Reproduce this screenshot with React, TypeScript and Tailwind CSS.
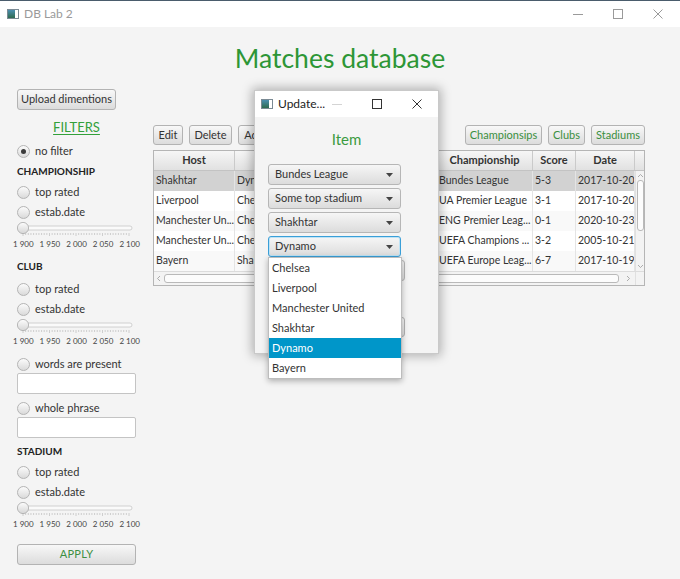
import React from 'react';

const matches = [
  { host: 'Shakhtar', guest: 'Dynamo', stadium: 'Donbass Arena', champ: 'Bundes League', score: '5-3', date: '2017-10-20' },
  { host: 'Liverpool', guest: 'Chelsea', stadium: 'Anfield', champ: 'UA Premier League', score: '3-1', date: '2017-10-20' },
  { host: 'Manchester Un...', guest: 'Chelsea', stadium: 'Old Trafford', champ: 'ENG Premier Leag...', score: '0-1', date: '2020-10-23' },
  { host: 'Manchester Un...', guest: 'Chelsea', stadium: 'Old Trafford', champ: 'UEFA Champions ...', score: '3-2', date: '2005-10-21' },
  { host: 'Bayern', guest: 'Shakhtar', stadium: 'Allianz Arena', champ: 'UEFA Europe Leag...', score: '6-7', date: '2017-10-19' },
];

const clubs = ['Chelsea', 'Liverpool', 'Manchester United', 'Shakhtar', 'Dynamo', 'Bayern'];

function AppIcon() {
  return (
    <svg width="12" height="10" viewBox="0 0 12 10" className="shrink-0">
      <defs>
        <linearGradient id="ai" x1="0" y1="0" x2="0" y2="1">
          <stop offset="0" stopColor="#4a8fb0" />
          <stop offset="1" stopColor="#2e6b4f" />
        </linearGradient>
      </defs>
      <rect x="0.5" y="0.5" width="11" height="9" fill="#fff" stroke="#7a8a94" />
      <rect x="1" y="1" width="7" height="8" fill="url(#ai)" />
    </svg>
  );
}

function Radio({ checked = false }: { checked?: boolean }) {
  return (
    <span className="relative inline-block w-[13px] h-[13px] rounded-full border border-[#b4b4b4] bg-gradient-to-b from-[#fbfbfb] to-[#dadada] shrink-0">
      {checked && <span className="absolute left-[3px] top-[3px] w-[5px] h-[5px] rounded-full bg-[#3a3a3a]" />}
    </span>
  );
}

function RadioRow({ label, checked = false, h = 'h-[20px]' }: { label: string; checked?: boolean; h?: string }) {
  return (
    <div className={`flex items-center gap-[5px] ${h} text-[11px] text-[#333]`}>
      <Radio checked={checked} />
      <span>{label}</span>
    </div>
  );
}

function SectionTitle({ children, mt }: { children: React.ReactNode; mt: string }) {
  return <div className={`${mt} h-[16px] leading-[16px] text-[10px] font-bold text-[#222]`}>{children}</div>;
}

function Slider() {
  const ticks = [];
  for (let i = 0; i <= 40; i++) {
    const x = 6 + i * (106 / 40);
    const major = i % 10 === 0;
    ticks.push(<line key={i} x1={x} x2={x} y1={11} y2={major ? 14 : 13} stroke="#c4c4c4" strokeWidth="0.8" />);
  }
  return (
    <div className="h-[25px]">
      <svg width="119" height="14" viewBox="0 0 119 14" className="block">
        <defs>
          <linearGradient id="th" x1="0" y1="0" x2="0" y2="1">
            <stop offset="0" stopColor="#fdfdfd" />
            <stop offset="1" stopColor="#d6d6d6" />
          </linearGradient>
        </defs>
        <rect x="1" y="4" width="114" height="4" rx="2" fill="#fafafa" stroke="#c6c6c6" strokeWidth="0.8" />
        {ticks}
        <circle cx="6" cy="6" r="5.6" fill="url(#th)" stroke="#a9a9a9" strokeWidth="0.8" />
      </svg>
      <div className="ml-[-4px] w-[127px] flex justify-between text-[8px] leading-[10px] text-[#444] mt-[3px]">
        <span>1 900</span>
        <span>1 950</span>
        <span>2 000</span>
        <span>2 050</span>
        <span>2 100</span>
      </div>
    </div>
  );
}

function FxButton({ children, className = '' }: { children?: React.ReactNode; className?: string }) {
  return (
    <div
      className={`h-[20px] flex items-center justify-center rounded-[3px] border border-[#b3b3b3] bg-gradient-to-b from-[#f8f8f8] to-[#dcdcdc] text-[11px] ${className}`}
    >
      {children}
    </div>
  );
}

function TextField() {
  return <div className="w-[119px] h-[21px] border border-[#c4c4c4] rounded-[2px] bg-white" />;
}

function Combo({ label, focused = false, className = '' }: { label: string; focused?: boolean; className?: string }) {
  return (
    <div
      className={`h-[21px] flex items-center justify-between pl-[6px] pr-[7px] rounded-[3px] border bg-gradient-to-b from-[#f6f6f6] to-[#dcdcdc] text-[11px] text-[#333] ${
        focused ? 'border-[#3a9fd8] shadow-[inset_0_0_0_1px_#bfe3f5]' : 'border-[#b6b6b6]'
      } ${className}`}
    >
      <span>{label}</span>
      <svg width="7" height="4" viewBox="0 0 7 4">
        <path d="M0 0 L7 0 L3.5 4 Z" fill="#444" />
      </svg>
    </div>
  );
}

function WinControls({ dim = false, gap }: { dim?: boolean; gap: string }) {
  return (
    <div className={`flex items-center ${gap}`}>
      <svg width="10" height="10" viewBox="0 0 10 10">
        <line x1="0" y1="5.5" x2="10" y2="5.5" stroke={dim ? '#d4d4d4' : '#9a9a9a'} strokeWidth="1" />
      </svg>
      <svg width="10" height="10" viewBox="0 0 10 10">
        <rect x="0.5" y="0.5" width="9" height="9" fill="none" stroke={dim ? '#333' : '#9a9a9a'} strokeWidth="1" />
      </svg>
      <svg width="10" height="10" viewBox="0 0 10 10">
        <path d="M0.5 0.5 L9.5 9.5 M9.5 0.5 L0.5 9.5" stroke={dim ? '#333' : '#9a9a9a'} strokeWidth="1" />
      </svg>
    </div>
  );
}

function Table() {
  const cols = ['w-[81px]', 'w-[101px]', 'w-[101px]', 'w-[96px]', 'w-[43px]', 'w-[59px]'];
  const heads = ['Host', 'Guest', 'Stadium', 'Championship', 'Score', 'Date'];
  return (
    <div className="mt-[5px] w-[492px] border border-[#b5b5b5] bg-white">
      <div className="flex h-[20px] border-b border-[#c3c3c3] bg-gradient-to-b from-[#f6f6f6] to-[#e1e1e1]">
        {heads.map((h, i) => (
          <div key={h} className={`${cols[i]} shrink-0 border-r border-[#cacaca] flex items-center justify-center text-[11px] font-bold text-[#333]`}>
            {h}
          </div>
        ))}
        <div className="flex-1" />
      </div>
      <div className="flex">
        <div className="flex-1">
          {matches.map((m, r) => {
            const vals = [m.host, m.guest, m.stadium, m.champ, m.score, m.date];
            const bg = r === 0 ? 'bg-[#d2d2d2]' : r % 2 === 1 ? 'bg-white' : 'bg-[#f9f9f9]';
            return (
              <div key={r} className={`flex h-[20px] ${bg}`}>
                {vals.map((v, i) => (
                  <div
                    key={i}
                    className={`${cols[i]} shrink-0 border-r border-[#e4e4e4] pl-[2px] flex items-center overflow-hidden whitespace-nowrap text-[10.5px] text-[#333]`}
                  >
                    {v}
                  </div>
                ))}
              </div>
            );
          })}
        </div>
        <div className="w-[9px] shrink-0 bg-[#f3f3f3] border-l border-[#e0e0e0] flex flex-col items-center">
          <svg width="7" height="6" viewBox="0 0 7 6" className="mt-[2px]">
            <path d="M1 4 L3.5 1.5 L6 4" fill="none" stroke="#999" strokeWidth="0.8" />
          </svg>
          <div className="mt-[1px] w-[7px] h-[51px] rounded-[3px] border border-[#b9b9b9] bg-[#fcfcfc]" />
          <div className="flex-1" />
          <svg width="7" height="6" viewBox="0 0 7 6" className="mb-[2px]">
            <path d="M1 2 L3.5 4.5 L6 2" fill="none" stroke="#999" strokeWidth="0.8" />
          </svg>
        </div>
      </div>
      <div className="flex h-[14px] border-t border-[#dcdcdc]">
        <div className="flex-1 bg-[#f3f3f3] flex items-center px-[2px]">
          <svg width="6" height="7" viewBox="0 0 6 7">
            <path d="M4 1 L1.5 3.5 L4 6" fill="none" stroke="#999" strokeWidth="0.8" />
          </svg>
          <div className="ml-[2px] w-[455px] h-[9px] rounded-[3px] border border-[#b9b9b9] bg-[#fcfcfc]" />
          <div className="flex-1" />
          <svg width="6" height="7" viewBox="0 0 6 7" className="mr-[2px]">
            <path d="M2 1 L4.5 3.5 L2 6" fill="none" stroke="#999" strokeWidth="0.8" />
          </svg>
        </div>
        <div className="w-[9px] bg-[#f3f3f3] border-l border-[#e0e0e0]" />
      </div>
    </div>
  );
}

function UpdateDialog() {
  return (
    <div className="absolute left-[254px] top-[90px] w-[185px] h-[264px] bg-[#f4f4f4] border border-[#c9c9c9] shadow-[0_0_10px_2px_rgba(0,0,0,0.28)] flex flex-col">
      <div className="h-[26px] bg-white flex items-center pl-[6px] pr-[16px] shrink-0">
        <AppIcon />
        <span className="ml-[5px] text-[12px] text-[#222] w-[58px]">Update...</span>
        <div className="flex-1" />
        <WinControls dim gap="gap-[30px]" />
      </div>
      <div className="relative flex-1 px-[13px]">
        <div className="mt-[11px] h-[22px] leading-[22px] text-center text-[15px] text-[#3a9b3f]">Item</div>
        <div className="mt-[14px] flex flex-col gap-[3px] w-[133px]">
          <Combo label="Bundes League" />
          <Combo label="Some top stadium" />
          <Combo label="Shakhtar" />
          <Combo label="Dynamo" focused />
          <Combo label="" className="w-[137px]" />
        </div>
        <FxButton className="mt-[36px] ml-[62px] w-[75px]" />
      </div>
    </div>
  );
}

function ClubDropdown() {
  return (
    <div className="absolute left-[268px] top-[257px] w-[134px] bg-white border border-[#bdbdbd] shadow-[0_2px_6px_rgba(0,0,0,0.3)]">
      {clubs.map((c) => (
        <div
          key={c}
          className={`h-[20px] flex items-center pl-[3px] text-[11px] ${c === 'Dynamo' ? 'bg-[#0096c9] text-white' : 'text-[#333]'}`}
        >
          {c}
        </div>
      ))}
    </div>
  );
}

export default function App() {
  return (
    <div className="relative w-[680px] h-[579px] overflow-hidden bg-[#f4f4f4] font-['Lato',sans-serif]">
      {/* Window title bar */}
      <div className="h-[27px] bg-white border-t border-[#4a5c6c] flex items-center pl-[7px] pr-[17px]">
        <AppIcon />
        <span className="ml-[5px] text-[12px] text-[#9a9a9a]">DB Lab 2</span>
        <div className="flex-1" />
        <WinControls gap="gap-[30px]" />
      </div>

      <div className="mt-[12px] h-[38px] leading-[38px] text-center text-[26.5px] text-[#2d9636]">Matches database</div>

      <div className="flex">
        {/* Filters panel */}
        <div className="w-[153px] shrink-0 pl-[17px] pr-[17px] pt-[12px]">
          <FxButton className="w-[99px] h-[21px] text-[#333]">Upload dimentions</FxButton>
          <div className="mt-[8px] h-[18px] leading-[18px] text-center text-[13px] text-[#33a03a] underline underline-offset-2">FILTERS</div>
          <div className="mt-[5px]">
            <RadioRow label="no filter" checked />
          </div>

          <SectionTitle mt="mt-[2px]">CHAMPIONSHIP</SectionTitle>
          <div className="mt-[3px]">
            <RadioRow label="top rated" />
            <RadioRow label="estab.date" />
          </div>
          <Slider />

          <SectionTitle mt="mt-[11px]">CLUB</SectionTitle>
          <div className="mt-[5px]">
            <RadioRow label="top rated" />
            <RadioRow label="estab.date" />
          </div>
          <Slider />

          <div className="mt-[11px]">
            <RadioRow label="words are present" h="h-[18px]" />
          </div>
          <TextField />
          <div className="mt-[5px]">
            <RadioRow label="whole phrase" h="h-[18px]" />
          </div>
          <TextField />

          <SectionTitle mt="mt-[5px]">STADIUM</SectionTitle>
          <div className="mt-[3px]">
            <RadioRow label="top rated" />
            <RadioRow label="estab.date" />
          </div>
          <Slider />

          <FxButton className="mt-[17px] w-[119px] h-[21px] text-[#3d8f43] tracking-[0.3px]">APPLY</FxButton>
        </div>

        {/* Matches table */}
        <div className="pt-[48px]">
          <div className="w-[492px] flex justify-between">
            <div className="flex gap-[6px] text-[#333]">
              <FxButton className="w-[30px]">Edit</FxButton>
              <FxButton className="w-[43px]">Delete</FxButton>
              <FxButton className="w-[40px]">Add...</FxButton>
            </div>
            <div className="flex gap-[6px] text-[#3a8f40]">
              <FxButton className="w-[77px]">Championsips</FxButton>
              <FxButton className="w-[37px]">Clubs</FxButton>
              <FxButton className="w-[54px]">Stadiums</FxButton>
            </div>
          </div>
          <Table />
        </div>
      </div>

      <UpdateDialog />
      <ClubDropdown />
    </div>
  );
}
